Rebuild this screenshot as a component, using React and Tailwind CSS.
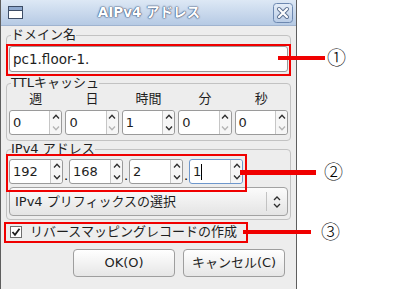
import React from "react";

const FONT = { fontFamily: '"DejaVu Sans", "Noto Sans CJK JP", sans-serif' };
const CIRCLE = { fontFamily: '"DejaVu Sans", "Noto Sans CJK JP", sans-serif', fontWeight: 300 };

const Up = ({ off }) => (
  <svg width="8" height="5" viewBox="0 0 8 5">
    <path d="M1 4.5 L4 1.2 L7 4.5" fill="none" stroke={off ? "#b4b4b4" : "#2e2e2e"} strokeWidth="1.3" />
  </svg>
);

const Down = ({ off }) => (
  <svg width="8" height="5" viewBox="0 0 8 5">
    <path d="M1 0.5 L4 3.8 L7 0.5" fill="none" stroke={off ? "#b4b4b4" : "#2e2e2e"} strokeWidth="1.3" />
  </svg>
);

// スピンボックス
const Spin = ({ value, downOff, focused, caret, className = "" }) => (
  <div
    className={`h-[25px] flex border rounded-[3px] bg-white ${focused ? "border-[#6e97cc]" : "border-[#9a9a9a]"} ${className}`}
  >
    <div className="flex-1 flex items-center pl-[3px] text-[13px] text-[#1e1e1e]">
      {value}
      {caret && <span className="w-px h-[16px] bg-black" />}
    </div>
    <div className="w-[12px] flex flex-col border-l border-[#c6c6c6] bg-[#f6f6f6] rounded-r-[3px]">
      <div className="flex-1 flex items-center justify-center">
        <Up />
      </div>
      <div className="flex-1 flex items-center justify-center">
        <Down off={downOff} />
      </div>
    </div>
  </div>
);

const Group = ({ label, children, className = "" }) => (
  <fieldset className={`border border-[#c2c2c2] rounded-[4px] px-[2px] ${className}`}>
    <legend className="ml-[2px] text-[13px] leading-[16px] text-[#1e1e1e]">{label}</legend>
    {children}
  </fieldset>
);

export default function App() {
  const ttl = [
    { label: "週", value: "0", downOff: true },
    { label: "日", value: "0", downOff: true },
    { label: "時間", value: "1", downOff: false },
    { label: "分", value: "0", downOff: true },
    { label: "秒", value: "0", downOff: true },
  ];

  return (
    <div className="relative w-[400px] h-[289px] bg-white overflow-hidden" style={FONT}>
      <div className="w-[297px] h-[289px] flex flex-col bg-[#ededed] border-x border-[#5e5e5e]">
        {/* タイトルバー */}
        <div className="h-[26px] flex items-center px-[7px] bg-gradient-to-b from-[#dde8f5] to-[#b6cae4] border-b border-[#9fb3cf]">
          <svg width="15" height="13" viewBox="0 0 15 13">
            <rect x="0.5" y="0.5" width="14" height="12" fill="#ffffff" stroke="#3d4d66" />
            <rect x="1" y="1" width="13" height="3" fill="#8fa9cf" />
            <line x1="1" y1="4.5" x2="14" y2="4.5" stroke="#3d4d66" />
          </svg>
          <div className="flex-1 text-center text-[13.5px] font-bold text-white [text-shadow:0_0_2px_#3f5478,0_0_1px_#3f5478,0_0_1px_#3f5478] pl-[2px]">
            AIPv4 アドレス
          </div>
          <svg width="20" height="20" viewBox="0 0 20 20" className="-mr-[4px]">
            <defs>
              <linearGradient id="cb" x1="0" y1="0" x2="0" y2="1">
                <stop offset="0" stopColor="#e6eef8" />
                <stop offset="1" stopColor="#b9cce6" />
              </linearGradient>
            </defs>
            <rect x="0.5" y="0.5" width="19" height="19" rx="3" fill="url(#cb)" stroke="#6d88b0" />
            <path d="M6 6 L14 14 M14 6 L6 14" stroke="#5a6f90" strokeWidth="4" strokeLinecap="round" />
            <path d="M6 6 L14 14 M14 6 L6 14" stroke="#ffffff" strokeWidth="2.2" strokeLinecap="round" />
          </svg>
        </div>

        <div className="flex flex-col px-[5px] pt-[1px]">
          <Group label="ドメイン名" className="pb-[2px]">
            <div className="mt-[3px] h-[26px] flex items-center px-[3px] bg-white border border-[#9a9a9a] rounded-[3px] text-[13.5px] text-[#1e1e1e]">
              pc1.floor-1.
            </div>
          </Group>

          <Group label="TTLキャッシュ" className="pb-[5px]">
            <div className="grid grid-cols-5 gap-x-[3px]">
              {ttl.map((t) => (
                <div key={t.label} className="flex flex-col">
                  <div className="h-[16px] leading-[16px] text-center text-[13px] text-[#1e1e1e]">{t.label}</div>
                  <Spin value={t.value} downOff={t.downOff} className="mt-[3px]" />
                </div>
              ))}
            </div>
          </Group>

          <Group label="IPv4 アドレス" className="pb-[3px]">
            <div className="mt-[2px] flex items-center">
              <Spin value="192" className="w-[54px]" />
              <span className="w-[6px] text-center text-[13px] leading-none mt-[8px]">.</span>
              <Spin value="168" className="w-[54px]" />
              <span className="w-[6px] text-center text-[13px] leading-none mt-[8px]">.</span>
              <Spin value="2" className="w-[54px]" />
              <span className="w-[6px] text-center text-[13px] leading-none mt-[8px]">.</span>
              <Spin value="1" focused caret className="w-[54px]" />
            </div>
            <div className="mt-[3px] h-[29px] flex items-center bg-gradient-to-b from-[#fbfbfb] to-[#e4e4e4] border border-[#a2a2a2] rounded-[4px]">
              <span className="flex-1 pl-[5px] text-[13px] text-[#1e1e1e]">IPv4 プリフィックスの選択</span>
              <span className="h-[19px] border-l border-[#c2c2c2]" />
              <svg width="20" height="14" viewBox="0 0 20 14">
                <path d="M7 5 L10 2 L13 5 M7 9 L10 12 L13 9" fill="none" stroke="#2e2e2e" strokeWidth="1.3" />
              </svg>
            </div>
          </Group>

          <div className="h-[22px] flex items-center pl-[4px] mt-[1px]">
            <svg width="12" height="12" viewBox="0 0 12 12">
              <rect x="0.5" y="0.5" width="11" height="11" fill="#ffffff" stroke="#6e6e6e" />
              <path d="M2.5 6 L5 8.8 L9.5 2.8" fill="none" stroke="#1e1e1e" strokeWidth="1.8" />
            </svg>
            <span className="ml-[8px] text-[13px] text-[#1e1e1e]">リバースマッピングレコードの作成</span>
          </div>

          <div className="flex justify-end gap-[8px] mt-[6px] pr-[6px]">
            <button className="w-[102px] h-[28px] bg-gradient-to-b from-[#ffffff] to-[#e6e6e6] border border-[#9e9e9e] rounded-[4px] text-[13px] text-[#1e1e1e]">
              OK(O)
            </button>
            <button className="w-[102px] h-[28px] bg-gradient-to-b from-[#ffffff] to-[#e6e6e6] border border-[#9e9e9e] rounded-[4px] text-[13px] text-[#1e1e1e]">
              キャンセル(C)
            </button>
          </div>
        </div>
      </div>

      {/* 注記 */}
      <div className="absolute left-[6px] top-[44px] w-[285px] h-[32px] border-2 border-[#f00000]" />
      <div className="absolute left-[278px] top-[56px] w-[47px] h-[4px] bg-[#f00000]" />
      <div className="absolute left-[327px] top-[47px] text-[19px] leading-[22px] text-black" style={CIRCLE}>①</div>

      <div className="absolute left-[6px] top-[154px] w-[241px] h-[38px] border-2 border-[#f00000]" />
      <div className="absolute left-[240px] top-[170px] w-[76px] h-[5px] bg-[#f00000]" />
      <div className="absolute left-[324px] top-[161px] text-[19px] leading-[22px] text-black" style={CIRCLE}>②</div>

      <div className="absolute left-[4px] top-[222px] w-[244px] h-[21px] border-2 border-[#f00000]" />
      <div className="absolute left-[243px] top-[230px] w-[68px] h-[4px] bg-[#f00000]" />
      <div className="absolute left-[321px] top-[221px] text-[19px] leading-[22px] text-black" style={CIRCLE}>③</div>
    </div>
  );
}
